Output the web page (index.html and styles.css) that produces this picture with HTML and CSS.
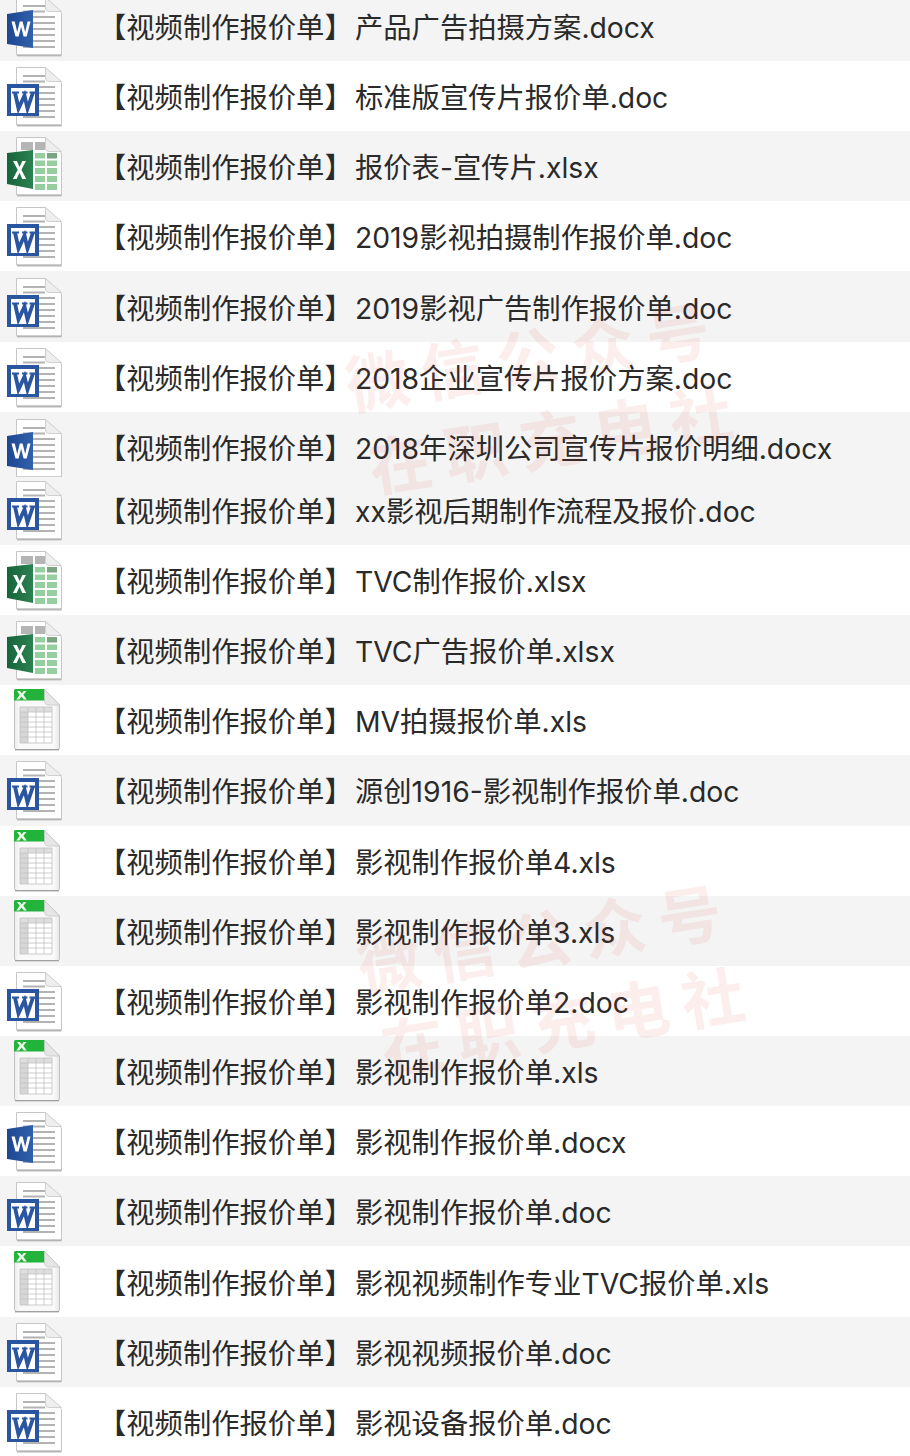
FILE: index.html
```html
<!DOCTYPE html>
<html lang="zh-CN">
<head>
<meta charset="utf-8">
<title>视频制作报价单</title>
<link rel="stylesheet" href="styles.css">
</head>
<body>
<svg class="defs" width="0" height="0" aria-hidden="true">
  <defs>
    <linearGradient id="wblue" x1="0" x2="1" y1="0" y2="0"><stop offset="0" stop-color="#1d4791"/><stop offset="1" stop-color="#3161ab"/></linearGradient>
    <linearGradient id="xgreen" x1="0" x2="1" y1="0" y2="0"><stop offset="0" stop-color="#16653a"/><stop offset="1" stop-color="#2c8152"/></linearGradient>
    <linearGradient id="sheet" x1="0" x2="1" y1="0" y2="0"><stop offset="0" stop-color="#ececec"/><stop offset=".12" stop-color="#f9f9f9"/><stop offset=".88" stop-color="#f9f9f9"/><stop offset="1" stop-color="#e6e6e6"/></linearGradient>
    <symbol id="page" viewBox="0 0 70 70">
      <path d="M17 65.200H61.500" stroke="#dcdcdc" stroke-width="1.500"/>
      <path d="M16.500 6.500H45.500L61.500 22V64H16.500Z" fill="#fff" stroke="#c6c6c6" stroke-width="1"/>
      <path d="M17 64.200H61.500" stroke="#a6a6a6" stroke-width="1"/>
      <path d="M45.500 6.500V17Q45.500 20.500 49 20.500H61.500Z" fill="#eeeeee" stroke="#c6c6c6" stroke-width=".8"/>
    </symbol>
    <symbol id="lines" viewBox="0 0 70 70">
      <path d="M23 15H45M23 20.500H45M23 26H55M23 32H55M23 38H55M23 44H55M23 50H55M23 56H55" stroke="#b3b3b3" stroke-width="2.200"/>
    </symbol>
    <symbol id="word-new" viewBox="0 0 70 70">
      <use href="#page" width="70" height="70"/>
      <use href="#lines" width="70" height="70"/>
      <path d="M7 23L33 19V57L7 53Z" fill="url(#wblue)"/>
      <path d="M11.500 30.500h3.300l2.400 10.500 2.600-10.500h2.800l2.600 10.500 2.400-10.500h2.900l-3.800 15h-3.100l-2.500-9.800-2.500 9.800h-3.100Z" fill="#fff"/>
    </symbol>
    <symbol id="word-old" viewBox="0 0 70 70">
      <use href="#page" width="70" height="70"/>
      <use href="#lines" width="70" height="70"/>
      <rect x="7" y="23" width="32" height="32" fill="#2a55a0"/>
      <rect x="11" y="27" width="24" height="25" fill="#fff"/>
      <path d="M15 31.500L18.500 47.500L24.500 34.500L27.500 47.500L33 31.500" fill="none" stroke="#2a55a0" stroke-width="3.800"/>
      <path d="M12 31.500H19M22 31.500H27.500M29.500 31.500H35" stroke="#2a55a0" stroke-width="1.800"/>
    </symbol>
    <symbol id="excel-new" viewBox="0 0 70 70">
      <use href="#page" width="70" height="70"/>
      <rect x="21" y="11" width="12" height="8" fill="#b5b5b5"/>
      <rect x="35" y="11" width="10" height="8" fill="#b5b5b5"/>
      <g fill="#96cf9f">
        <rect x="35" y="22" width="10" height="5.500"/><rect x="47" y="22" width="10" height="5.500" fill="#7aa583"/>
        <rect x="35" y="29.500" width="10" height="5.500"/><rect x="47" y="29.500" width="10" height="5.500"/>
        <rect x="35" y="37" width="10" height="6"/><rect x="47" y="37" width="10" height="6"/>
        <rect x="35" y="45" width="10" height="6"/><rect x="47" y="45" width="10" height="6"/>
        <rect x="35" y="53" width="10" height="6"/><rect x="47" y="53" width="10" height="6"/>
      </g>
      <path d="M7 22L33 19V58L7 53Z" fill="url(#xgreen)"/>
      <path d="M13 30h3.900l2.700 6 2.800-6h3.600l-4.600 8.800 4.800 9.200h-3.900l-2.800-6.300-2.900 6.300h-3.700l4.800-9.200Z" fill="#fff"/>
    </symbol>
    <symbol id="excel-old" viewBox="0 0 70 70">
      <path d="M15 65.300H59" stroke="#dadada" stroke-width="1.500"/>
      <path d="M14.500 4.500H44.500L59.500 20V62.500Q59.500 64.500 57.500 64.500H16.500Q14.500 64.500 14.500 62.500Z" fill="url(#sheet)" stroke="#c2c2c2" stroke-width="1"/>
      <path d="M15 64.500H59" stroke="#a0a0a0" stroke-width="1"/>
      <path d="M14 15.500V6Q14 4 16 4H44.500L45 15.500Z" fill="#22b33a"/>
      <path d="M17 6h3l1.800 2.500L23.600 6H26.500l-3.200 3.800 3.500 4.700h-3.100l-2.200-3-2.200 3h-3l3.400-4.700Z" fill="#eefaea"/>
      <path d="M44.500 4.500V15.500Q44.500 20 49 20H59.500Z" fill="#e6e6e6" stroke="#c6c6c6" stroke-width=".8"/>
      <rect x="20" y="22" width="32" height="36" fill="#fff"/>
      <rect x="20" y="22" width="8" height="36" fill="#d6d6d6"/>
      <rect x="20" y="22" width="32" height="5" fill="#dedede"/>
      <path d="M20 22H52V58H20ZM28 22V58M36 22V58M44 22V58M20 27H52M20 32H52M20 37H52M20 42H52M20 47H52M20 52H52" stroke="#c2c2c2" stroke-width=".8" fill="none"/>
    </symbol>
  </defs>
</svg>

<main class="list">
  <div class="row row-first alt"><svg class="icon"><use href="#word-new"/></svg><span class="name"><span class="tag">【视频制作报价单】</span>产品广告拍摄方案.docx</span></div>
  <div class="row"><svg class="icon"><use href="#word-old"/></svg><span class="name"><span class="tag">【视频制作报价单】</span>标准版宣传片报价单.doc</span></div>
  <div class="row alt"><svg class="icon"><use href="#excel-new"/></svg><span class="name"><span class="tag">【视频制作报价单】</span>报价表-宣传片.xlsx</span></div>
  <div class="row"><svg class="icon"><use href="#word-old"/></svg><span class="name"><span class="tag">【视频制作报价单】</span>2019影视拍摄制作报价单.doc</span></div>
  <div class="row alt"><svg class="icon"><use href="#word-old"/></svg><span class="name"><span class="tag">【视频制作报价单】</span>2019影视广告制作报价单.doc</span></div>
  <div class="row"><svg class="icon"><use href="#word-old"/></svg><span class="name"><span class="tag">【视频制作报价单】</span>2018企业宣传片报价方案.doc</span></div>
  <div class="row row-cut alt"><svg class="icon"><use href="#word-new"/></svg><span class="name"><span class="tag">【视频制作报价单】</span>2018年深圳公司宣传片报价明细.docx</span></div>
  <div class="row row-after-cut alt"><svg class="icon"><use href="#word-old"/></svg><span class="name"><span class="tag">【视频制作报价单】</span>xx影视后期制作流程及报价.doc</span></div>
  <div class="row"><svg class="icon"><use href="#excel-new"/></svg><span class="name"><span class="tag">【视频制作报价单】</span>TVC制作报价.xlsx</span></div>
  <div class="row alt"><svg class="icon"><use href="#excel-new"/></svg><span class="name"><span class="tag">【视频制作报价单】</span>TVC广告报价单.xlsx</span></div>
  <div class="row"><svg class="icon"><use href="#excel-old"/></svg><span class="name"><span class="tag">【视频制作报价单】</span>MV拍摄报价单.xls</span></div>
  <div class="row alt"><svg class="icon"><use href="#word-old"/></svg><span class="name"><span class="tag">【视频制作报价单】</span>源创1916-影视制作报价单.doc</span></div>
  <div class="row"><svg class="icon"><use href="#excel-old"/></svg><span class="name"><span class="tag">【视频制作报价单】</span>影视制作报价单4.xls</span></div>
  <div class="row alt"><svg class="icon"><use href="#excel-old"/></svg><span class="name"><span class="tag">【视频制作报价单】</span>影视制作报价单3.xls</span></div>
  <div class="row"><svg class="icon"><use href="#word-old"/></svg><span class="name"><span class="tag">【视频制作报价单】</span>影视制作报价单2.doc</span></div>
  <div class="row alt"><svg class="icon"><use href="#excel-old"/></svg><span class="name"><span class="tag">【视频制作报价单】</span>影视制作报价单.xls</span></div>
  <div class="row"><svg class="icon"><use href="#word-new"/></svg><span class="name"><span class="tag">【视频制作报价单】</span>影视制作报价单.docx</span></div>
  <div class="row alt"><svg class="icon"><use href="#word-old"/></svg><span class="name"><span class="tag">【视频制作报价单】</span>影视制作报价单.doc</span></div>
  <div class="row"><svg class="icon"><use href="#excel-old"/></svg><span class="name"><span class="tag">【视频制作报价单】</span>影视视频制作专业TVC报价单.xls</span></div>
  <div class="row alt"><svg class="icon"><use href="#word-old"/></svg><span class="name"><span class="tag">【视频制作报价单】</span>影视视频报价单.doc</span></div>
  <div class="row"><svg class="icon"><use href="#word-old"/></svg><span class="name"><span class="tag">【视频制作报价单】</span>影视设备报价单.doc</span></div>
</main>

<div class="mark mark-a"><div>微信公众号</div><div class="mark-second">在职充电社</div></div>
<div class="mark mark-b"><div>微信公众号</div><div class="mark-second">在职充电社</div></div>
</body>
</html>
```

FILE: styles.css
```css
html, body {
  margin: 0;
  padding: 0;
  background: #fff;
}
body {
  position: relative;
  width: 910px;
  height: 1456px;
  overflow: hidden;
  font-family: Inter, "Noto Sans CJK SC", sans-serif;
  color: #2a2a2a;
}
.defs {
  position: absolute;
}
.list {
  display: flex;
  flex-direction: column;
}
.row {
  display: flex;
  align-items: center;
  flex: none;
  height: 70.17px;
  overflow: hidden;
}
.alt {
  background: #f4f4f4;
}
.row-first {
  height: 61px;
  align-items: flex-start;
}
.row-first .icon {
  margin-top: -9px;
}
.row-first .name {
  margin-top: 4px;
}
.row-cut {
  height: 65px;
  align-items: flex-start;
}
.row-cut .icon {
  margin-top: 1px;
}
.row-cut .name {
  margin-top: 13px;
}
.row-after-cut {
  height: 68.15px;
}
.row-after-cut .icon {
  margin-top: -1px;
}
.row-after-cut .name {
  margin-top: -2px;
}
.icon {
  flex: none;
  width: 70px;
  height: 70px;
  filter: blur(.3px);
}
.name {
  margin-left: 28px;
  padding-top: 4px;
  font-size: 28.3px;
  line-height: 40px;
  white-space: nowrap;
}
.tag {
  display: inline-block;
  width: 257px;
}
.mark {
  position: absolute;
  font-family: "Noto Sans CJK SC", sans-serif;
  font-size: 63px;
  font-weight: 700;
  line-height: 85px;
  letter-spacing: 13px;
  color: rgba(214, 60, 50, .085);
  white-space: nowrap;
  transform: rotate(-9deg);
  pointer-events: none;
}
.mark-second {
  margin-left: 10px;
}
.mark-a {
  left: 350px;
  top: 309px;
}
.mark-b {
  left: 362px;
  top: 891px;
}
```
